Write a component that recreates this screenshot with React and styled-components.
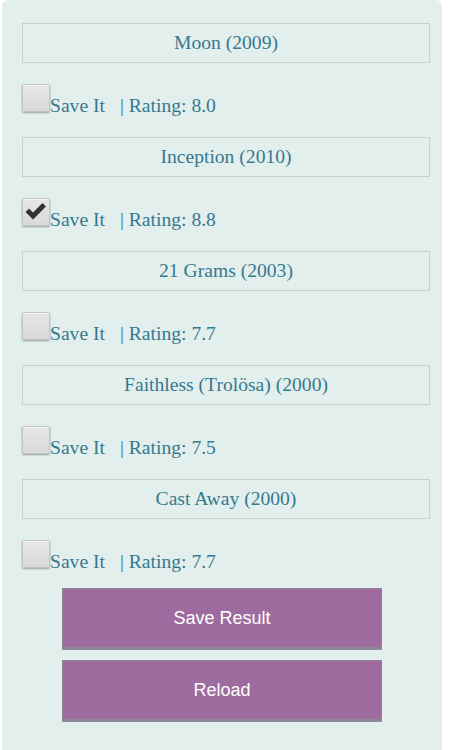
import React, { useState } from 'react';
import styled, { createGlobalStyle } from 'styled-components';

const GlobalStyle = createGlobalStyle`
  html, body { margin: 0; padding: 0; background: #fff; }
  body { font-family: 'Liberation Serif', 'Times New Roman', serif; }
`;

const movies = [
  { title: 'Moon (2009)', rating: '8.0', saved: false },
  { title: 'Inception (2010)', rating: '8.8', saved: true },
  { title: '21 Grams (2003)', rating: '7.7', saved: false },
  { title: 'Faithless (Trolösa) (2000)', rating: '7.5', saved: false },
  { title: 'Cast Away (2000)', rating: '7.7', saved: false },
];

function CheckIcon() {
  return (
    <Check width="22" height="19" viewBox="0 0 22 19">
      <path d="M0.5 10 L4 6.5 L8 10.5 L17.5 1 L21 4.5 L8 17.5 Z" fill="#333" />
    </Check>
  );
}

export default function App() {
  const [saved, setSaved] = useState(movies.map(m => m.saved));

  const toggle = i => setSaved(s => s.map((v, j) => (j === i ? !v : v)));

  return (
    <>
      <GlobalStyle />
      <Panel>
        <List>
          {movies.map((m, i) => (
            <Item key={m.title}>
              <Title>{m.title}</Title>
              <Row>
                <Box onClick={() => toggle(i)}>{saved[i] && <CheckIcon />}</Box>
                <Label onClick={() => toggle(i)}>Save It</Label>
                <Rating>| Rating: {m.rating}</Rating>
              </Row>
            </Item>
          ))}
        </List>
        <Actions>
          <Button>Save Result</Button>
          <Button>Reload</Button>
        </Actions>
      </Panel>
    </>
  );
}

const Panel = styled.div`
  width: 440px;
  margin-left: 2px;
  box-sizing: border-box;
  padding: 23px 12px 40px 20px;
  background: #e2efed;
  border-radius: 6px 6px 0 0;
  color: #37798f;
  font-size: 19.6px;
`;

const List = styled.div`
  display: flex;
  flex-direction: column;
  gap: 21px;
`;

const Item = styled.div`
  display: flex;
  flex-direction: column;
  gap: 21px;
`;

const Title = styled.div`
  height: 38px;
  line-height: 38px;
  border: 1px solid #c6d1d0;
  text-align: center;
`;

const Row = styled.div`
  display: flex;
  align-items: baseline;
  height: 32px;
`;

const Box = styled.span`
  position: relative;
  display: inline-block;
  width: 28px;
  height: 28px;
  box-sizing: border-box;
  flex-shrink: 0;
  border: 1px solid #c4c4c4;
  border-radius: 2px;
  background: linear-gradient(to bottom, #e6e6e6 0%, #d9d9d9 100%);
  box-shadow: inset 0 1px 0 #f4f4f4, 0 1px 2px rgba(0, 0, 0, 0.35);
  cursor: pointer;
`;

const Check = styled.svg`
  position: absolute;
  left: 2px;
  top: 3px;
`;

const Label = styled.span`
  cursor: pointer;
`;

const Rating = styled.span`
  margin-left: 15px;
`;

const Actions = styled.div`
  display: flex;
  flex-direction: column;
  align-items: center;
  gap: 10px;
  margin-top: 16px;
  padding-right: 8px;
`;

const Button = styled.button`
  width: 320px;
  height: 62px;
  box-sizing: border-box;
  border: 1px solid #8e8796;
  border-bottom-width: 3px;
  background: #9d6b9e;
  color: #fff;
  font-family: 'Liberation Sans', Arial, sans-serif;
  font-size: 18px;
  cursor: pointer;
`;
